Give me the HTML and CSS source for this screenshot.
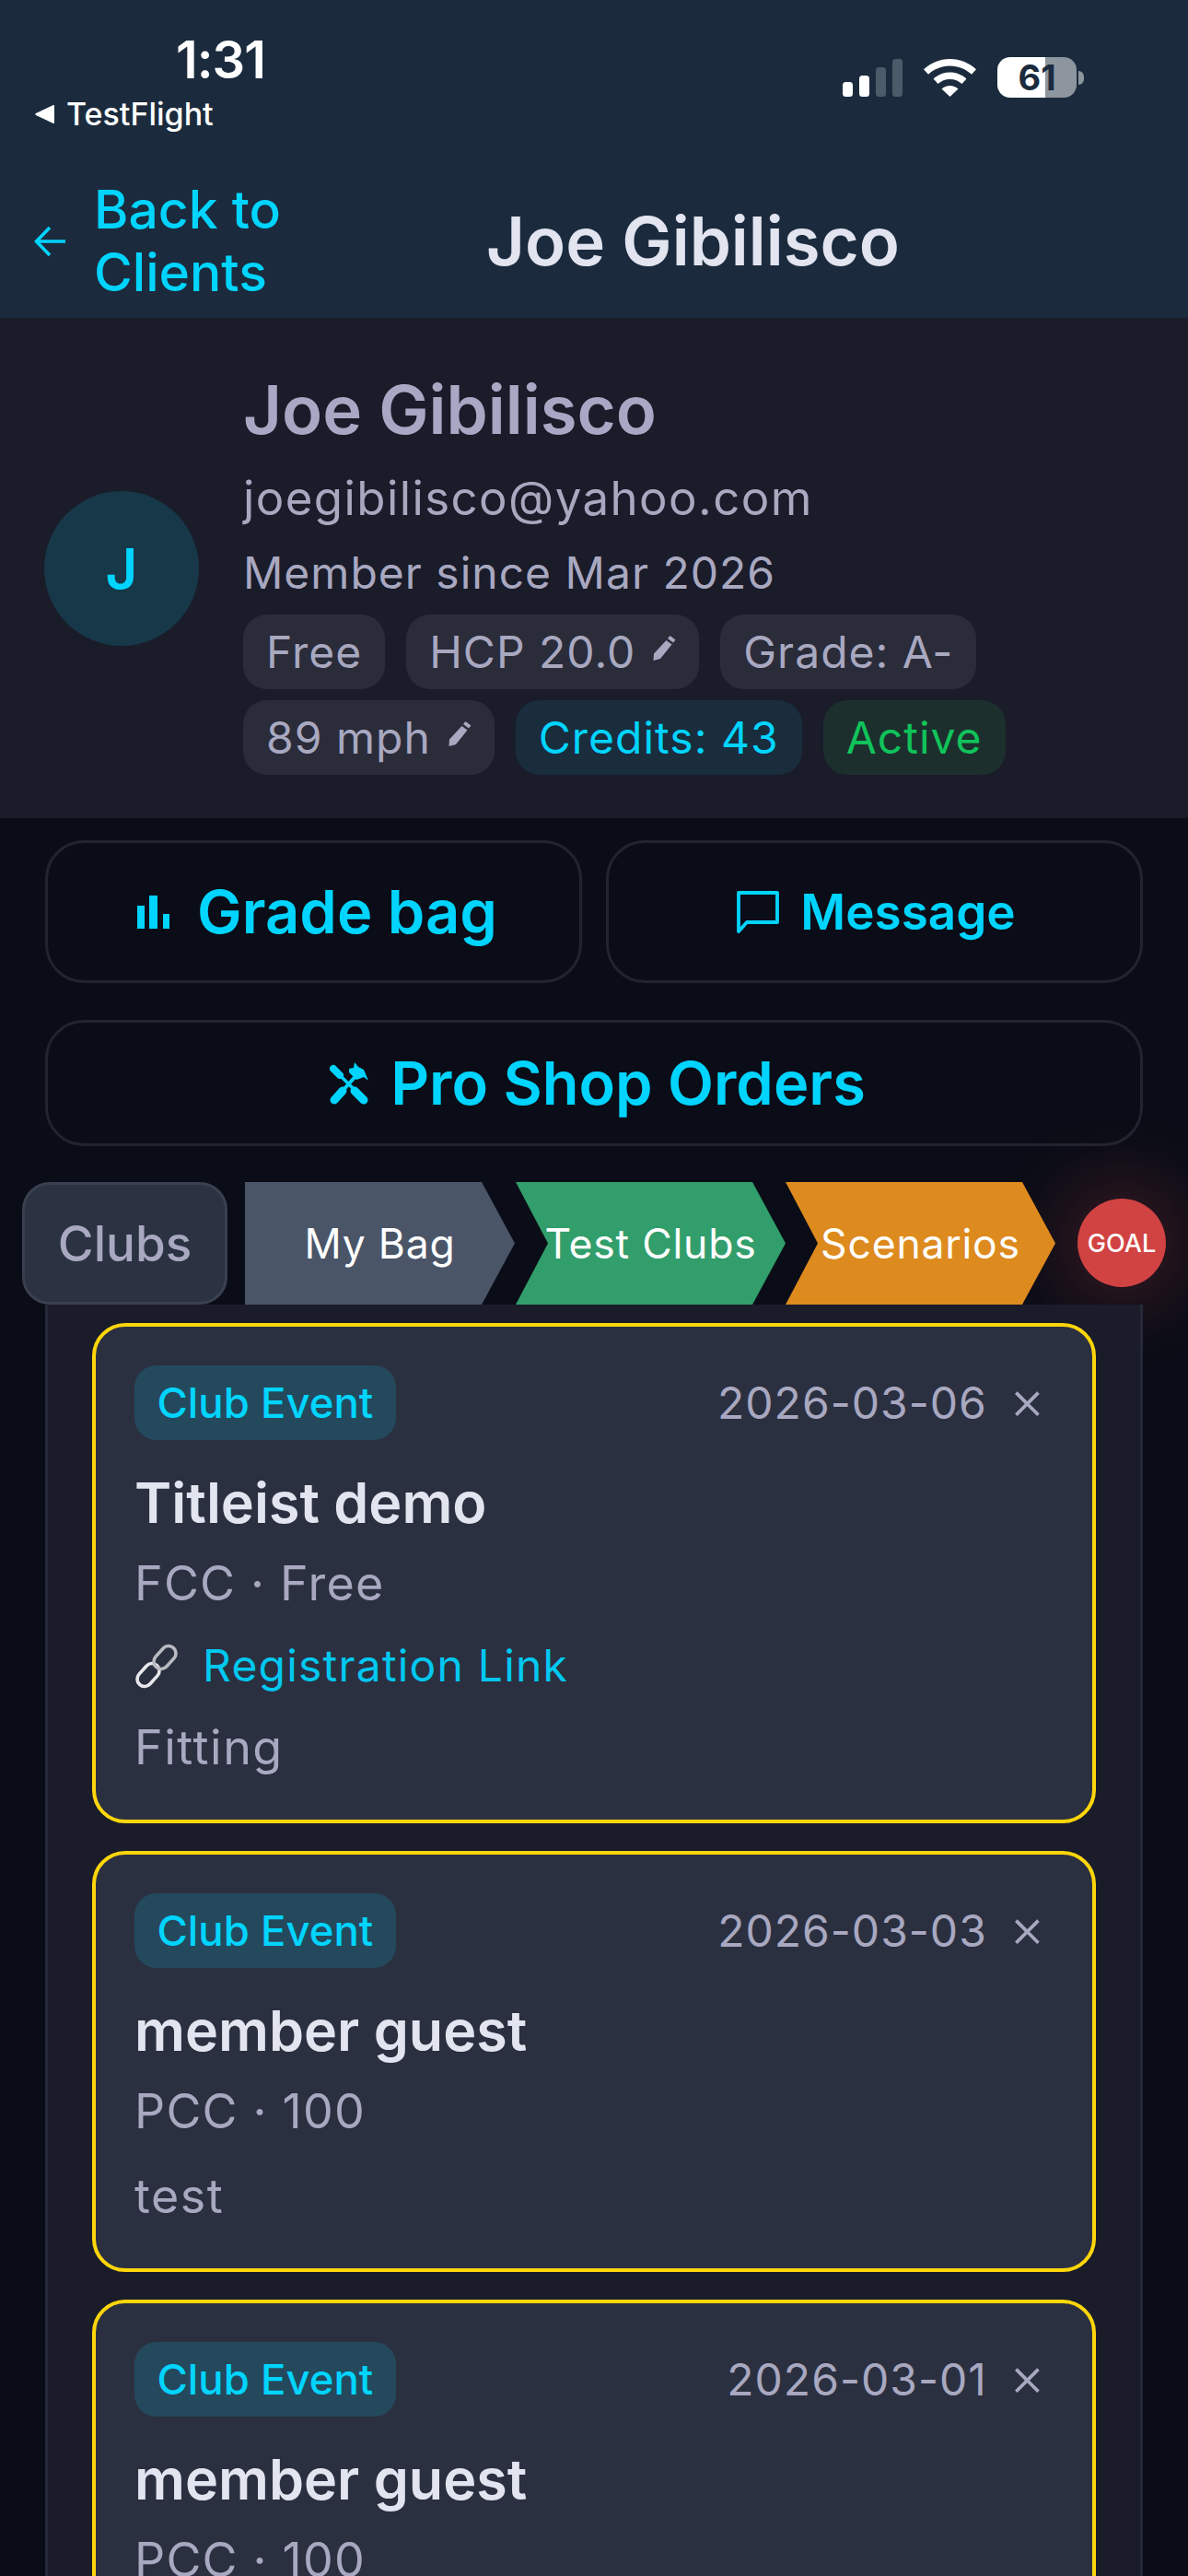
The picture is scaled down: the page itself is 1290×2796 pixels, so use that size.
FILE: index.html
```html
<!DOCTYPE html>
<html lang="en">
<head>
<meta charset="utf-8">
<title>Joe Gibilisco</title>
<link rel="stylesheet" href="styles.css">
</head>
<body>
<header class="top">
  <div class="status">
    <div class="status-left">
      <div class="time">1:31</div>
      <div class="testflight"><svg class="tf-back" viewBox="0 0 22 20"><path d="M21 1v18a1 1 0 0 1-1.6.8L1 11a1.2 1.2 0 0 1 0-2L19.4.2A1 1 0 0 1 21 1z"/></svg><span>TestFlight</span></div>
    </div>
    <div class="status-right">
      <svg class="signal" viewBox="0 0 65 41"><rect y="25" width="11" height="16" rx="3.5" fill="#fff"/><rect x="18" y="18" width="11" height="23" rx="3.5" fill="#fff"/><rect x="36" y="9" width="11" height="32" rx="3.5" fill="#4b5b69"/><rect x="54" width="11" height="41" rx="3.5" fill="#4b5b69"/></svg>
      <svg class="wifi" viewBox="0 0 57 41"><path fill="#fff" d="M28.500 0C39.500 0 49.500 4.300 57 11.300L52 16.800C45.700 11 37.500 7.500 28.500 7.500S11.300 11 5 16.800L0 11.300C7.500 4.300 17.500 0 28.500 0zM28.500 14.500c7 0 13.300 2.700 18 7l-5 5.400c-3.400-3.100-8-5-13-5s-9.600 1.900-13 5l-5-5.400c4.700-4.300 11-7 18-7zM28.500 29c3.400 0 6.600 1.300 9 3.500L28.500 41l-9-8.500c2.400-2.200 5.600-3.500 9-3.500z"/></svg>
      <div class="battery"><span class="battery-level">61</span></div>
    </div>
  </div>
  <nav class="nav">
    <a class="back"><svg class="back-arrow" viewBox="0 0 36 36"><path d="M34 18H3M17 3 2.500 18 17 33" fill="none" stroke="#00d4ff" stroke-width="3.600"/></svg><span class="back-text">Back to<br>Clients</span></a>
    <h1 class="nav-title">Joe Gibilisco</h1>
  </nav>
</header>

<section class="profile">
  <div class="avatar">J</div>
  <div class="profile-info">
    <h2 class="profile-name">Joe Gibilisco</h2>
    <div class="profile-line email">joegibilisco@yahoo.com</div>
    <div class="profile-line since">Member since Mar 2026</div>
    <div class="chips">
      <span class="chip">Free</span>
      <span class="chip">HCP 20.0<svg class="pencil" viewBox="0 0 27 27"><path d="M20.500 0l6 4.500-2.500 3-6-4.500zM16.500 5l6 4.500L10 25l-7.500 2 .5-7.500z" fill="#a8a8c0"/></svg></span>
      <span class="chip">Grade: A-</span>
      <span class="chip">89 mph<svg class="pencil" viewBox="0 0 27 27"><path d="M20.500 0l6 4.500-2.500 3-6-4.500zM16.500 5l6 4.500L10 25l-7.500 2 .5-7.500z" fill="#a8a8c0"/></svg></span>
      <span class="chip chip-credits">Credits: 43</span>
      <span class="chip chip-active">Active</span>
    </div>
  </div>
</section>

<main class="content">
  <div class="action-row">
    <button class="action action-lg"><svg class="ic-bars" viewBox="0 0 35 36"><rect y="11" width="8" height="25" fill="#00d4ff"/><rect x="13" width="9" height="36" fill="#00d4ff"/><rect x="28" y="20" width="7" height="16" fill="#00d4ff"/></svg>Grade bag</button>
    <button class="action action-md"><svg class="ic-chat" viewBox="0 0 46 46"><path d="M2 2h42v32H11L2 44z" fill="none" stroke="#00d4ff" stroke-width="3.800" stroke-linejoin="round"/></svg>Message</button>
  </div>
  <button class="action action-wide"><svg class="ic-tools" viewBox="0 0 42 46"><g fill="none" stroke="#00d4ff" stroke-linecap="round"><path d="M4 7l7 7" stroke-width="8"/><path d="M11 14l16 16" stroke-width="3.500"/><path d="M27 31l10 10" stroke-width="9"/><path d="M5 41l9-10" stroke-width="9"/><path d="M14 31l16-18" stroke-width="4"/></g><path fill="#00d4ff" d="M21 7l5-1 1-6 4 5 6 3 5 12-5-4-5 2-3 1-8-8z"/></svg>Pro Shop Orders</button>

  <div class="stepper">
    <div class="tab-clubs">Clubs</div>
    <div class="arrow arrow-first arrow-gray">My Bag</div>
    <div class="arrow arrow-green">Test Clubs</div>
    <div class="arrow arrow-orange">Scenarios</div>
    <div class="goal">GOAL</div>
  </div>

  <div class="panel">
    <article class="card">
      <div class="card-head"><span class="badge">Club Event</span><span class="date">2026-03-06</span><span class="close">×</span></div>
      <h3 class="card-title">Titleist demo</h3>
      <p class="card-meta">FCC · Free</p>
      <p class="card-link"><svg class="ic-link" viewBox="0 0 48 50"><g fill="none" stroke-width="3.600"><rect x="-8" y="-14" width="16" height="28" rx="8" transform="translate(15 35) rotate(42)" stroke="#e8e8ee"/><rect x="-8" y="-14" width="16" height="28" rx="8" transform="translate(33 16) rotate(42)" stroke="#b9bac2"/></g></svg><a>Registration Link</a></p>
      <p class="card-note">Fitting</p>
    </article>
    <article class="card">
      <div class="card-head"><span class="badge">Club Event</span><span class="date">2026-03-03</span><span class="close">×</span></div>
      <h3 class="card-title">member guest</h3>
      <p class="card-meta">PCC · 100</p>
      <p class="card-note">test</p>
    </article>
    <article class="card">
      <div class="card-head"><span class="badge">Club Event</span><span class="date">2026-03-01</span><span class="close">×</span></div>
      <h3 class="card-title">member guest</h3>
      <p class="card-meta">PCC · 100</p>
    </article>
  </div>
</main>
</body>
</html>
```
FILE: styles.css
```css
* { box-sizing: border-box; }
html, body { margin: 0; padding: 0; }
body {
  width: 1290px;
  height: 2796px;
  overflow: hidden;
  background: #0a0d17;
  font-family: Inter, "Liberation Sans", sans-serif;
  color: #a8a8c0;
}
h1, h2, h3, p { margin: 0; }

.top { height: 345px; background: #1b2b3d; }
.status { height: 179px; padding: 0 121px 0 38px; display: flex; justify-content: space-between; }
.status-left { padding-top: 37px; }
.time { padding-left: 153px; font-size: 56px; line-height: 56px; font-weight: 600; color: #fff; letter-spacing: -1px; }
.testflight { margin-top: 11px; display: flex; align-items: center; gap: 12px; font-size: 34px; line-height: 40px; font-weight: 500; color: #fff; }
.tf-back { width: 22px; height: 20px; fill: #fff; }
.status-right { padding-top: 62px; display: flex; align-items: flex-start; gap: 23px; }
.signal { width: 65px; height: 41px; margin-top: 2px; }
.wifi { width: 57px; height: 41px; margin-top: 2px; }
.battery {
  position: relative;
  width: 86px;
  height: 44px;
  border-radius: 14px;
  background: linear-gradient(90deg, #fff 60.500%, #8d959e 60.500%);
  font-size: 38px;
  line-height: 44px;
  font-weight: 700;
  text-align: center;
  color: #1b2b3d;
}
.battery::after {
  content: "";
  position: absolute;
  left: 88px;
  top: 15px;
  width: 6px;
  height: 15px;
  border-radius: 0 8px 8px 0;
  background: #8d959e;
}

.nav { height: 166px; padding: 0 0 0 37px; display: flex; align-items: center; }
.back { display: flex; align-items: center; gap: 29px; color: #00d4ff; font-size: 57px; line-height: 68px; font-weight: 500; }
.back-arrow { width: 36px; height: 36px; }
.nav-title {
  margin-left: 223px;
  font-size: 72.500px;
  line-height: 76px;
  font-weight: 600;
  color: #e2e4f0;
}

.profile { height: 543px; background: #1a1c2a; padding: 0 48px; display: flex; align-items: center; gap: 48px; }
.avatar {
  width: 168px;
  height: 168px;
  flex: none;
  border-radius: 50%;
  background: #173848;
  color: #00d4ff;
  font-size: 60px;
  font-weight: 600;
  display: flex;
  align-items: center;
  justify-content: center;
}
.profile-info { flex: 1; padding-top: 12px; }
.profile-name { font-size: 72.500px; line-height: 80px; font-weight: 600; color: #a8a8c4; }
.profile-line { font-size: 48px; letter-spacing: 1px; color: #a8a8c0; }
.email { margin-top: 24px; line-height: 64px; font-size: 51px; letter-spacing: 1.4px; }
.since { margin-top: 17px; line-height: 64px; }
.chips { margin-top: 13px; display: flex; flex-wrap: wrap; gap: 12px 23px; }
.chip {
  height: 81px;
  padding: 0 25px;
  border-radius: 26px;
  background: #2a2c3a;
  font-size: 48px;
  letter-spacing: 1px;
  display: inline-flex;
  align-items: center;
  gap: 17px;
}
.chip-credits { background: #192d3d; color: #00d4ff; }
.chip-active { background: #1c2f2d; color: #10c35a; }
.pencil { width: 27px; height: 27px; margin-top: -8px; }

.action-row { padding: 24px 49px 0; display: flex; gap: 26px; }
.action {
  background: transparent;
  border: 3px solid #21242f;
  font-family: inherit;
  color: #00d4ff;
  display: flex;
  align-items: center;
  justify-content: center;
  padding: 0;
  font-weight: 600;
}
.action-lg, .action-md { flex: none; width: 583px; height: 155px; border-radius: 42px; }
.action-lg { font-size: 65px; gap: 30px; padding-left: 8px; }
.action-md { font-size: 53px; gap: 23px; padding-left: 4px; }
.action-wide { margin: 40px 49px 0; width: 1192px; height: 137px; border-radius: 42px; font-size: 65px; gap: 24px; padding-left: 8px; }
.ic-bars { width: 35px; height: 36px; }
.ic-chat { width: 46px; height: 46px; }
.ic-tools { width: 42px; height: 46px; }

.stepper { position: relative; margin-top: 39px; height: 133px; padding-left: 24px; display: flex; align-items: stretch; }
.tab-clubs {
  width: 223px;
  flex: none;
  margin-right: 19px;
  border: 3px solid #3a4050;
  border-radius: 30px;
  background: #2b3242;
  font-size: 53px;
  font-weight: 500;
  color: #a8a8c0;
  display: flex;
  align-items: center;
  justify-content: center;
}
.arrow {
  position: relative;
  z-index: 1;
  width: 293px;
  flex: none;
  font-size: 44.500px;
  letter-spacing: .8px;
  color: #fff;
  display: flex;
  align-items: center;
  justify-content: center;
  clip-path: polygon(0 0, 257px 0, 100% 50%, 257px 100%, 0 100%, 35px 50%);
}
.arrow-first { clip-path: polygon(0 0, 257px 0, 100% 50%, 257px 100%, 0 100%); }
.arrow-gray { background: #4a5568; }
.arrow-green { background: #319e6b; margin-left: 1px; }
.arrow-orange { background: #dd8a1e; }
.goal {
  position: absolute;
  left: 1170px;
  top: 18px;
  width: 96px;
  height: 96px;
  border-radius: 50%;
  background: #d14343;
  box-shadow: 0 0 80px 20px rgba(209, 67, 67, .24);
  font-size: 27px;
  font-weight: 500;
  color: #fff;
  display: flex;
  align-items: center;
  justify-content: center;
}

.panel {
  position: relative;
  z-index: 2;
  margin: 0 49px;
  height: 1380px;
  overflow: hidden;
  padding: 20px 48px 0;
  background: #1a1c2a;
  border-left: 3px solid #262a38;
  border-right: 3px solid #262a38;
  display: flex;
  flex-direction: column;
  gap: 30px;
}
.card {
  flex: none;
  padding: 42px 42px 46px;
  border: 4px solid #ffd60a;
  border-radius: 36px;
  background: #2b3040;
}
.card-head { display: flex; align-items: center; height: 81px; }
.badge {
  height: 81px;
  padding: 0 24.500px;
  border-radius: 24px;
  background: #24495c;
  color: #00d4ff;
  font-size: 45.500px;
  font-weight: 500;
  display: flex;
  align-items: center;
}
.date { margin-left: auto; font-size: 48px; letter-spacing: 1px; color: #a8a8c0; }
.close { margin-left: 24px; padding-right: 9px; font-size: 60px; line-height: 60px; font-weight: 300; color: #a8a8c0; position: relative; top: -4px; }
.card-title { margin-top: 30px; font-size: 61px; line-height: 76px; font-weight: 600; color: #e2e4f0; }
.card-meta { margin-top: 18px; font-size: 52px; line-height: 64px; letter-spacing: 1.2px; color: #a8a8c0; }
.card-link { margin-top: 25px; display: flex; align-items: center; gap: 26px; font-size: 48px; line-height: 64px; letter-spacing: 1.2px; color: #00c8f0; }
.ic-link { width: 48px; height: 50px; }
.card-note { margin-top: 25px; font-size: 52px; line-height: 64px; letter-spacing: 1.5px; color: #a8a8c0; }
.card-meta + .card-note { margin-top: 28px; }
```
